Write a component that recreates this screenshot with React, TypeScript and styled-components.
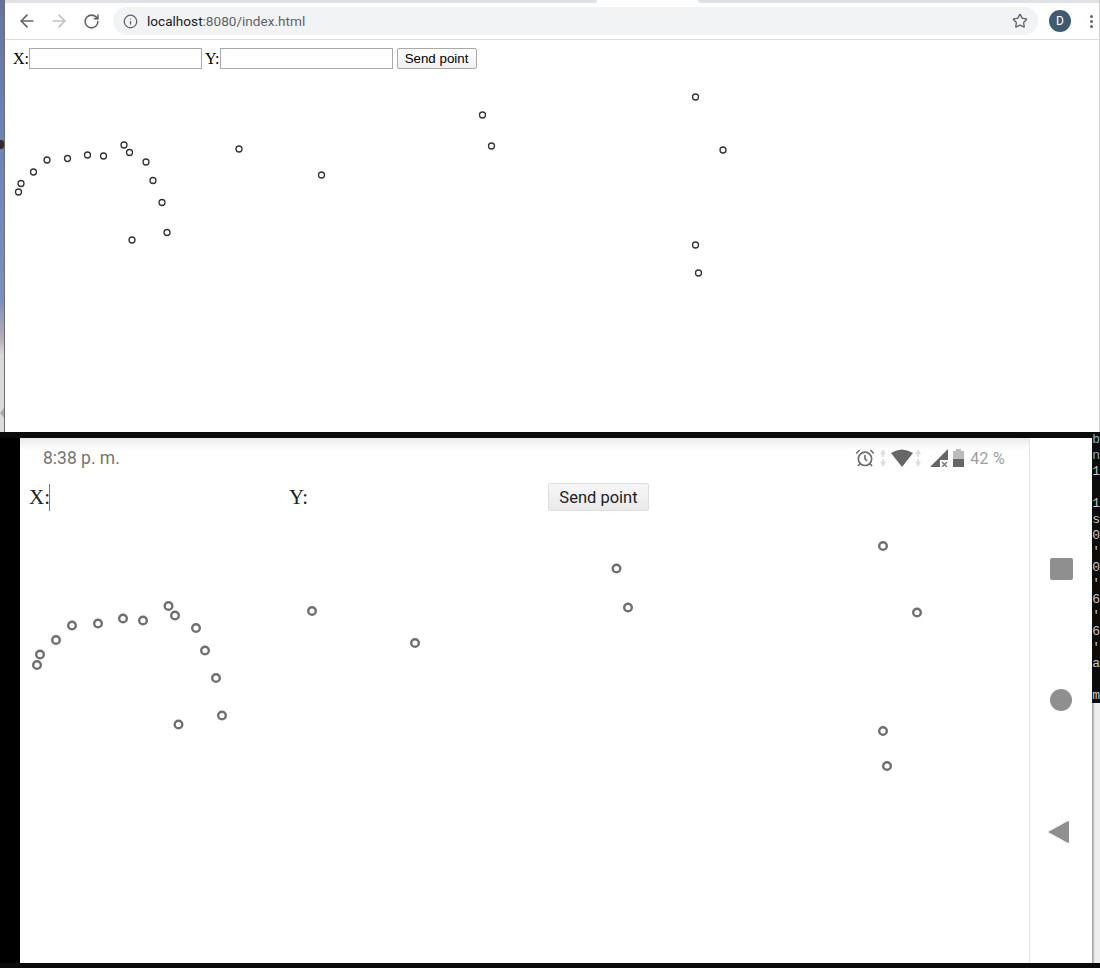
import React from 'react';
import styled, { createGlobalStyle } from 'styled-components';
import { AlarmClock, ArrowLeft, ArrowRight, Info, RotateCw, Star } from 'lucide-react';

const desktopPoints = [
    [18.5, 192], [21, 183.5], [33.5, 172], [47, 160], [67.5, 158.5], [87.5, 155], [103.5, 156],
    [124, 145], [129.5, 152.5], [146, 162], [153, 180.5], [162, 202.5], [167, 232.5], [132, 240],
    [239, 149], [321.5, 175], [482.5, 115], [491.5, 146], [695.5, 97], [723, 150], [695.5, 245], [698.5, 273],
];

const phonePoints = [
    [37, 665], [40, 654.5], [56, 640], [72, 625.5], [98, 623.5], [123, 618.5], [143, 620.5],
    [168.5, 606], [175, 615.5], [196, 628], [205, 650.5], [216, 678], [222, 715.5], [178.5, 724.5],
    [312, 611], [415, 643], [616.5, 568.5], [628, 607.5], [883, 546], [917, 612.5], [883, 731], [887, 766],
];

const terminalLines = ['b', 'n', '1', ' ', '1', 's', '0', "'", '0', "'", '6', "'", '6', "'", 'a', ' ', 'm'];

const App: React.FC = () => {
    return (
        <Page>
            <GlobalStyle />
            <DesktopWindow>
                <LeftEdge>
                    <EdgeIcon />
                    <EdgeChevron />
                </LeftEdge>
                <Browser>
                    <TabStrip>
                        <TabGap $side="left" />
                        <ActiveTab />
                        <TabGap $side="right" />
                    </TabStrip>
                    <Toolbar>
                        <NavButton><ArrowLeft size={20} color="#5f6368" strokeWidth={2} /></NavButton>
                        <NavButton><ArrowRight size={20} color="#bdc1c6" strokeWidth={2} /></NavButton>
                        <NavButton><RotateCw size={17} color="#5f6368" strokeWidth={2.2} /></NavButton>
                        <Omnibox>
                            <Info size={15} color="#5f6368" strokeWidth={2} />
                            <Url>localhost<UrlRest>:8080/index.html</UrlRest></Url>
                            <StarSlot><Star size={16} color="#5f6368" strokeWidth={2} /></StarSlot>
                        </Omnibox>
                        <Avatar>D</Avatar>
                        <Kebab><KebabDot /><KebabDot /><KebabDot /></Kebab>
                    </Toolbar>
                    <DesktopForm>
                        <DesktopLabel>X:</DesktopLabel>
                        <DesktopInput type="text" />
                        <DesktopLabel $gap>Y:</DesktopLabel>
                        <DesktopInput type="text" />
                        <DesktopButton type="button">Send point</DesktopButton>
                    </DesktopForm>
                    <Canvas viewBox="5 72 1094 360">
                        {desktopPoints.map(([x, y]) => (
                            <circle key={`${x}-${y}`} cx={x} cy={y} r={3} fill="#fff" stroke="#333" strokeWidth={1.3} />
                        ))}
                    </Canvas>
                </Browser>
            </DesktopWindow>

            <Lower>
                <PhoneColumn>
                    <Band />
                    <PhoneRow>
                        <Bezel />
                        <Screen>
                            <StatusBar>
                                <Clock>8:38 p. m.</Clock>
                                <StatusIcons>
                                    <AlarmClock size={20} color="#6e6e6e" strokeWidth={2} />
                                    <ActivityArrows $left={5} $right={5} />
                                    <svg width="22" height="18" viewBox="0 0 22 18">
                                        <path d="M0 4 Q11 -3 22 4 L11 18 Z" fill="#666" />
                                    </svg>
                                    <ActivityArrows $left={2} $right={9} />
                                    <svg width="18" height="18" viewBox="0 0 18 18">
                                        <path d="M18 0 V11 H10 V18 H0 Z" fill="#666" />
                                        <path d="M12 13 L17 18 M17 13 L12 18" stroke="#777" strokeWidth="1.4" />
                                    </svg>
                                    <Battery>
                                        <BatteryCap />
                                        <BatteryBody />
                                    </Battery>
                                    <Percent>42 %</Percent>
                                </StatusIcons>
                            </StatusBar>
                            <PhoneForm>
                                <PhoneField $width={260}>
                                    <PhoneLabel>X:</PhoneLabel>
                                    <Caret />
                                    <PhoneInput type="text" />
                                </PhoneField>
                                <PhoneField $width={259}>
                                    <PhoneLabel>Y:</PhoneLabel>
                                    <PhoneInput type="text" />
                                </PhoneField>
                                <PhoneButton type="button">Send point</PhoneButton>
                            </PhoneForm>
                            <Canvas viewBox="20 520 1009 443">
                                {phonePoints.map(([x, y]) => (
                                    <circle key={`${x}-${y}`} cx={x} cy={y} r={3.8} fill="#fff" stroke="#6f6f6f" strokeWidth={2.4} />
                                ))}
                            </Canvas>
                        </Screen>
                        <NavBar>
                            <SquareKey />
                            <RoundKey />
                            <BackKey width="23" height="24" viewBox="0 0 23 24">
                                <path d="M1 12 L21 1 Q22 1 22 2 V22 Q22 23 21 23 Z" fill="#8f8f8f" />
                            </BackKey>
                        </NavBar>
                    </PhoneRow>
                </PhoneColumn>
                <SideColumn>
                    <Terminal>
                        {terminalLines.map((line, index) => (
                            <TerminalLine key={index} $index={index}>{line}</TerminalLine>
                        ))}
                    </Terminal>
                    <SideRest />
                </SideColumn>
            </Lower>
            <BottomBar />
        </Page>
    );
};

export default App;

const GlobalStyle = createGlobalStyle`
    html, body {
        margin: 0;
        padding: 0;
        background: #fff;
    }
`;

const Page = styled.div`
    width: 1100px;
    height: 968px;
    display: flex;
    flex-direction: column;
    overflow: hidden;
    font-family: "Liberation Serif", serif;
`;

const DesktopWindow = styled.div`
    height: 432px;
    display: flex;
`;

const LeftEdge = styled.div`
    position: relative;
    width: 4px;
    flex-shrink: 0;
    border-right: 1px solid #6d6d6d;
    background: linear-gradient(#66739f 0, #6b86b8 150px, #7b8fbb 300px, #b9aebb 340px, #d8d8d8 354px, #dcdcdc 100%);
`;

const EdgeIcon = styled.div`
    position: absolute;
    left: 0;
    top: 140px;
    width: 4px;
    height: 9px;
    background: #3a2a2a;
    border-radius: 0 3px 3px 0;
`;

const EdgeChevron = styled.div`
    position: absolute;
    left: 0;
    top: 408px;
    width: 4px;
    height: 10px;
    background: #aaa;
    clip-path: polygon(100% 0, 0 50%, 100% 100%);
`;

const Browser = styled.div`
    flex: 1;
    min-width: 0;
    display: flex;
    flex-direction: column;
    background: #fff;
    border-right: 1px solid #d4d4d4;
`;

const TabStrip = styled.div`
    height: 3px;
    display: flex;
    background: #fff;
`;

const TabGap = styled.div<{ $side: 'left' | 'right' }>`
    ${(props) => props.$side === 'left' ? 'width: 592px;' : 'flex: 1;'}
    background: #dee1e6;
    border-bottom-${(props) => props.$side === 'left' ? 'right' : 'left'}-radius: 4px;
`;

const ActiveTab = styled.div`
    width: 101px;
`;

const Toolbar = styled.div`
    height: 37px;
    box-sizing: border-box;
    display: flex;
    align-items: center;
    padding: 4px 0 4px 6px;
    border-bottom: 1px solid #dadce0;
`;

const NavButton = styled.div`
    width: 32px;
    height: 28px;
    display: flex;
    align-items: center;
    justify-content: center;
`;

const Omnibox = styled.div`
    width: 925px;
    height: 28px;
    margin-left: 6px;
    margin-right: 11px;
    box-sizing: border-box;
    flex-shrink: 0;
    display: flex;
    align-items: center;
    gap: 9px;
    padding: 0 10px;
    border-radius: 14px;
    background: #f1f3f4;
`;

const Url = styled.span`
    font-family: Roboto, sans-serif;
    font-size: 13.6px;
    color: #202124;
`;

const UrlRest = styled.span`
    color: #5f6368;
`;

const StarSlot = styled.span`
    margin-left: auto;
    display: flex;
`;

const Avatar = styled.div`
    width: 22px;
    height: 22px;
    flex-shrink: 0;
    border-radius: 50%;
    background: #3f5b6e;
    color: #fff;
    font-family: Roboto, sans-serif;
    font-size: 12px;
    line-height: 22px;
    text-align: center;
`;

const Kebab = styled.div`
    margin-left: 19px;
    display: flex;
    flex-direction: column;
    gap: 2px;
`;

const KebabDot = styled.span`
    width: 3px;
    height: 3px;
    border-radius: 50%;
    background: #5f6368;
`;

const DesktopForm = styled.form`
    display: flex;
    align-items: center;
    height: 21px;
    padding: 8px 8px 3px;
`;

const DesktopLabel = styled.label<{ $gap?: boolean }>`
    font-size: 16px;
    color: #000;
    margin-left: ${(props) => props.$gap ? '3px' : '0'};
`;

const DesktopInput = styled.input`
    width: 173px;
    height: 21px;
    box-sizing: border-box;
    padding: 1px 2px;
    border: 1px solid #a9a9a9;
    background: #fff;
    outline: none;
`;

const DesktopButton = styled.button`
    width: 80px;
    height: 21px;
    margin-left: 4px;
    box-sizing: border-box;
    padding: 0;
    border: 1px solid #a9a9a9;
    border-radius: 2px;
    background: linear-gradient(#fff, #f0f0f0);
    color: #000;
    font-family: "Liberation Sans", sans-serif;
    font-size: 13.33px;
`;

const Canvas = styled.svg`
    flex: 1;
    min-height: 0;
    width: 100%;
    display: block;
`;

const Lower = styled.div`
    height: 531px;
    display: flex;
`;

const PhoneColumn = styled.div`
    width: 1093px;
    display: flex;
    flex-direction: column;
`;

const Band = styled.div`
    height: 6px;
    background: #0b0b0b;
`;

const PhoneRow = styled.div`
    flex: 1;
    display: flex;
    min-height: 0;
`;

const Bezel = styled.div`
    width: 20px;
    background: #000;
`;

const Screen = styled.div`
    width: 1009px;
    display: flex;
    flex-direction: column;
    background: #fff;
    border-right: 1px solid #e4e4e4;
`;

const StatusBar = styled.div`
    height: 40px;
    flex-shrink: 0;
    box-sizing: border-box;
    display: flex;
    align-items: center;
    justify-content: space-between;
    padding: 0 24px 0 23px;
    background: linear-gradient(#ececec, #fff 12px);
`;

const Clock = styled.span`
    font-family: Roboto, sans-serif;
    font-size: 17.5px;
    color: #757575;
`;

const StatusIcons = styled.div`
    display: flex;
    align-items: center;
`;

const ActivityArrows = styled.span<{ $left: number; $right: number }>`
    width: 6px;
    height: 18px;
    margin-left: ${(props) => props.$left}px;
    margin-right: ${(props) => props.$right}px;
    background: #dedede;
    clip-path: polygon(50% 0, 100% 30%, 65% 30%, 65% 45%, 35% 45%, 35% 30%, 0 30%, 50% 0, 35% 55%, 65% 55%, 65% 70%, 100% 70%, 50% 100%, 0 70%, 35% 70%, 35% 55%);
`;

const Battery = styled.div`
    width: 11px;
    margin-left: 5px;
    display: flex;
    flex-direction: column;
    align-items: center;
`;

const BatteryCap = styled.span`
    width: 5px;
    height: 2px;
    background: #bbb;
`;

const BatteryBody = styled.span`
    width: 11px;
    height: 16px;
    background: linear-gradient(#bbb 50%, #666 50%);
`;

const Percent = styled.span`
    margin-left: 6px;
    font-family: Roboto, sans-serif;
    font-size: 16px;
    letter-spacing: 0.3px;
    color: #9e9e9e;
`;

const PhoneForm = styled.form`
    height: 42px;
    flex-shrink: 0;
    box-sizing: border-box;
    display: flex;
    align-items: center;
    padding: 0 0 4px 9px;
`;

const PhoneField = styled.div<{ $width: number }>`
    width: ${(props) => props.$width}px;
    display: flex;
    align-items: center;
`;

const PhoneLabel = styled.label`
    font-size: 21px;
    color: #222;
`;

const Caret = styled.span`
    width: 1px;
    height: 27px;
    margin-left: -1px;
    background: #777;
`;

const PhoneInput = styled.input`
    flex: 1;
    min-width: 0;
    border: none;
    background: transparent;
    outline: none;
`;

const PhoneButton = styled.button`
    width: 101px;
    height: 28px;
    box-sizing: border-box;
    padding: 0;
    border: 1px solid #ddd;
    border-radius: 2px;
    background: linear-gradient(#f7f7f7, #e9e9e9);
    color: #222;
    font-family: Roboto, sans-serif;
    font-size: 16.5px;
`;

const NavBar = styled.div`
    flex: 1;
    display: flex;
    flex-direction: column;
    align-items: center;
    justify-content: center;
    gap: 109px;
    background: #fff;
`;

const SquareKey = styled.div`
    width: 23px;
    height: 22px;
    border-radius: 2px;
    background: #8f8f8f;
`;

const RoundKey = styled.div`
    width: 22px;
    height: 22px;
    border-radius: 50%;
    background: #8f8f8f;
`;

const BackKey = styled.svg`
    margin-right: 6px;
`;

const SideColumn = styled.div`
    flex: 1;
    display: flex;
    flex-direction: column;
`;

const Terminal = styled.div`
    height: 271px;
    overflow: hidden;
    background: #0c0c0c;
    font-family: "Liberation Mono", monospace;
    font-size: 13px;
    line-height: 16px;
    white-space: pre;
`;

const TerminalLine = styled.div<{ $index: number }>`
    color: ${(props) => props.$index < 2 ? '#7fb0d8' : '#c0c8d0'};
`;

const SideRest = styled.div`
    flex: 1;
    background: linear-gradient(90deg, #9a9a9a 0, #ececec 3px, #f1f1f1 100%);
`;

const BottomBar = styled.div`
    height: 5px;
    background: #0b0b0b;
`;
